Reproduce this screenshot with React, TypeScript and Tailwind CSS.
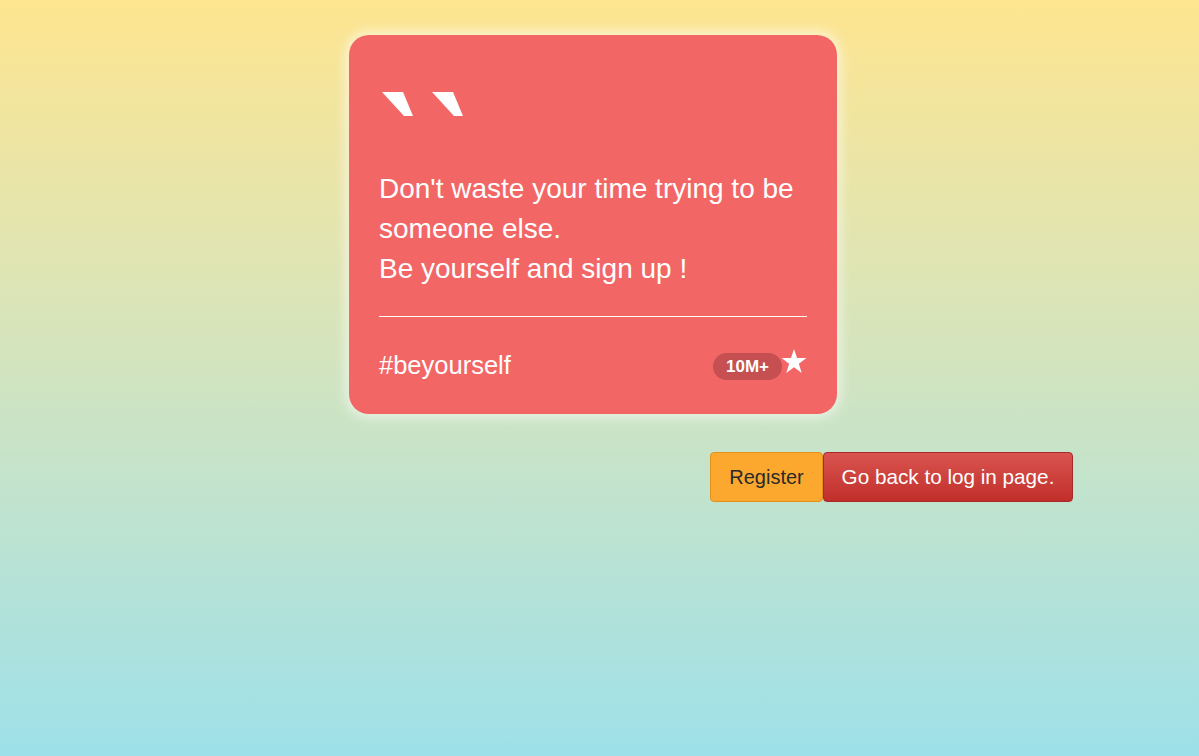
import { FC } from 'react';

const QuoteMark: FC = () => (
  <svg width="82" height="24" viewBox="0 0 82 24" className="block">
    <polygon points="0,0 21,0 31,24 22,24" fill="white" />
    <polygon points="50,0 71,0 81,24 72,24" fill="white" />
  </svg>
);

const Star: FC = () => (
  <svg width="26" height="25" viewBox="0 0 24 23" className="block">
    <polygon
      points="12,0 14.8,8.3 23.5,8.3 16.5,13.5 19.1,22 12,16.8 4.9,22 7.5,13.5 0.5,8.3 9.2,8.3"
      fill="white"
    />
  </svg>
);

const App: FC = () => {
  return (
    <div
      className="min-h-[756px] w-full bg-gradient-to-b from-[#fee58f] to-[#9de0e9] pt-[35px]"
      style={{ fontFamily: '"Liberation Sans", Arial, sans-serif' }}
    >
      <div className="pl-[349px]">
        <div className="w-[488px] h-[379px] rounded-[20px] bg-[#f36666] px-[30px] pt-[57px] text-white shadow-[0_0_12px_4px_rgba(255,255,255,0.55)]">
          <div className="pl-[3px]">
            <QuoteMark />
          </div>
          <p className="mt-[53px] text-[28px] leading-[40px]">
            Don't waste your time trying to be
            <br />
            someone else.
            <br />
            Be yourself and sign up !
          </p>
          <div className="mt-[27px] h-px bg-white" />
          <div className="mt-[33px] flex items-center justify-between">
            <span className="text-[25.5px] leading-[30px]">#beyourself</span>
            <div className="flex items-start">
              <span className="mt-[2px] rounded-full bg-[#c54f51] px-[13px] text-[17px] leading-[27px] font-bold">
                10M+
              </span>
              <div className="-mt-[2px] -ml-[1px]">
                <Star />
              </div>
            </div>
          </div>
        </div>
      </div>
      <div className="mt-[38px] flex pl-[710px]">
        <button className="h-[50px] w-[113px] rounded-[4px] border border-[#e0921c] bg-[#fca82e] text-[20px] text-[#2a2a2a]">
          Register
        </button>
        <button className="h-[50px] w-[250px] rounded-[4px] border border-[#a8282a] bg-gradient-to-b from-[#d9534f] to-[#c12e2a] text-[20.7px] text-white">
          Go back to log in page.
        </button>
      </div>
    </div>
  );
};

export default App;
